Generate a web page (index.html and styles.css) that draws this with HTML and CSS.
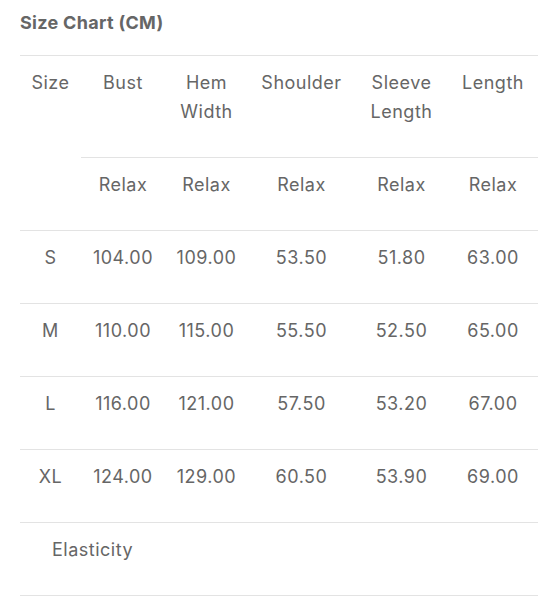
FILE: index.html
```html
<!DOCTYPE html>
<html>
  <head>
    <title>Size Chart</title>
    <meta charset="UTF-8" />
    <link rel="stylesheet" href="styles.css">
  </head>
  <body>
    <div class="chart">
      <h3 class="chart-title">Size Chart (CM)</h3>

      <table class="size-table">
        <colgroup>
          <col class="col-size" />
          <col class="col-bust" />
          <col class="col-hem" />
          <col class="col-shoulder" />
          <col class="col-sleeve" />
          <col class="col-length" />
        </colgroup>
        <thead>
          <tr>
            <th rowspan="2">Size</th>
            <th>Bust</th>
            <th>Hem Width</th>
            <th>Shoulder</th>
            <th>Sleeve Length</th>
            <th>Length</th>
          </tr>
          <tr>
            <th>Relax</th>
            <th>Relax</th>
            <th>Relax</th>
            <th>Relax</th>
            <th>Relax</th>
          </tr>
        </thead>
        <tbody>
          <tr>
            <td>S</td>
            <td>104.00</td>
            <td>109.00</td>
            <td>53.50</td>
            <td>51.80</td>
            <td>63.00</td>
          </tr>
          <tr>
            <td>M</td>
            <td>110.00</td>
            <td>115.00</td>
            <td>55.50</td>
            <td>52.50</td>
            <td>65.00</td>
          </tr>
          <tr>
            <td>L</td>
            <td>116.00</td>
            <td>121.00</td>
            <td>57.50</td>
            <td>53.20</td>
            <td>67.00</td>
          </tr>
          <tr>
            <td>XL</td>
            <td>124.00</td>
            <td>129.00</td>
            <td>60.50</td>
            <td>53.90</td>
            <td>69.00</td>
          </tr>
          <tr>
            <td colspan="2">Elasticity</td>
            <td></td>
            <td></td>
            <td></td>
            <td></td>
          </tr>
        </tbody>
      </table>
    </div>
  </body>
</html>
```

FILE: styles.css
```css
body {
  margin: 0;
  padding: 0 16px 0 20px;
  font-family: Inter, "Open Sans", sans-serif;
  color: #666;
  background: #fff;
}

.chart-title {
  margin: 12px 0 0;
  height: 43px;
  font-size: 18px;
  font-weight: 700;
  line-height: 22px;
  letter-spacing: 0.3px;
  color: #666;
}

.size-table {
  width: 518px;
  table-layout: fixed;
  border-collapse: collapse;
  border-top: 1px solid #e3e3e3;
}

.col-size { width: 61px; }
.col-bust { width: 84px; }
.col-hem { width: 83px; }
.col-shoulder { width: 107px; }
.col-sleeve { width: 93px; }
.col-length { width: 90px; }

.size-table th,
.size-table td {
  padding: 12px 2px 31px;
  font-size: 18px;
  font-weight: 400;
  line-height: 29px;
  letter-spacing: 0.5px;
  text-align: center;
  vertical-align: top;
  border-bottom: 1px solid #e3e3e3;
  color: #666;
}
```
